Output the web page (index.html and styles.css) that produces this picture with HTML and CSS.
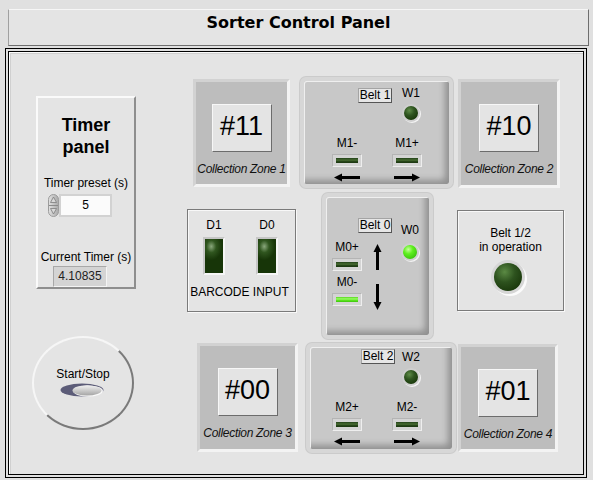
FILE: index.html
```html
<!DOCTYPE html>
<html lang="en">
<head>
<meta charset="utf-8">
<title>Sorter Control Panel</title>
<link rel="stylesheet" href="styles.css">
</head>
<body>
<header class="title">Sorter Control Panel</header>
<main class="frame">
  <div class="canvas">

    <section class="timer">
      <h1 class="timer-title">Timer<br>panel</h1>
      <div class="lbl lbl-preset">Timer preset (s)</div>
      <div class="numeric">
        <svg class="spin" width="11" height="23" viewBox="0 0 11 23">
          <defs>
            <linearGradient id="spg" x1="0" y1="0" x2="1" y2="0">
              <stop offset="0" stop-color="#e2e2e2"/>
              <stop offset="1" stop-color="#a9a9a9"/>
            </linearGradient>
          </defs>
          <rect x="0.5" y="0.5" width="10" height="22" rx="5" fill="url(#spg)" stroke="#9c9c9c"/>
          <line x1="1" y1="11.5" x2="10" y2="11.5" stroke="#8a8a8a"/>
          <path d="M5.5 3 L8.5 8.5 L2.5 8.5 Z" fill="#d8d8d8" stroke="#7c7c7c" stroke-width="0.8"/>
          <path d="M5.5 20 L8.5 14.5 L2.5 14.5 Z" fill="#d8d8d8" stroke="#7c7c7c" stroke-width="0.8"/>
        </svg>
        <span class="num-field">5</span>
      </div>
      <div class="lbl lbl-current">Current Timer (s)</div>
      <div class="indicator">4.10835</div>
    </section>

    <section class="startstop">
      <span class="ss-label">Start/Stop</span>
      <svg class="oval" width="44" height="14" viewBox="0 0 44 14">
        <defs>
          <linearGradient id="ovg" x1="0" y1="0" x2="0" y2="1">
            <stop offset="0" stop-color="#f2f2f2"/>
            <stop offset="1" stop-color="#a4a4a4"/>
          </linearGradient>
        </defs>
        <ellipse cx="22" cy="7" rx="21.5" ry="6.5" fill="#5c5c78"/>
        <ellipse cx="28" cy="8" rx="15" ry="5.5" fill="#fafafa"/>
        <ellipse cx="27" cy="7.4" rx="14.5" ry="5.2" fill="url(#ovg)"/>
      </svg>
    </section>

    <section class="zone zone1">
      <div class="zone-num">#11</div>
      <div class="zone-cap">Collection Zone 1</div>
    </section>

    <section class="belt belt1">
      <div class="belt-head">
        <span class="belt-tag">Belt 1</span>
        <div class="wcol"><span>W1</span><i class="led"></i></div>
      </div>
      <div class="motors">
        <div class="motor">
          <span>M1-</span><i class="bar"><b></b></i>
          <svg class="arrow-h" width="26" height="9" viewBox="0 0 26 9"><path d="M0 4.5 L8 0.5 L8 3 L26 3 L26 6 L8 6 L8 8.5 Z" fill="#000"/></svg>
        </div>
        <div class="motor">
          <span>M1+</span><i class="bar"><b></b></i>
          <svg class="arrow-h" width="26" height="9" viewBox="0 0 26 9"><path d="M26 4.5 L18 0.5 L18 3 L0 3 L0 6 L18 6 L18 8.5 Z" fill="#000"/></svg>
        </div>
      </div>
    </section>

    <section class="zone zone2">
      <div class="zone-num">#10</div>
      <div class="zone-cap">Collection Zone 2</div>
    </section>

    <section class="barcode">
      <div class="dleds">
        <div class="dcol"><span>D1</span><i class="dled"></i></div>
        <div class="dcol dcol-up"><span>D0</span><i class="dled"></i></div>
      </div>
      <div class="barcode-cap">BARCODE INPUT</div>
    </section>

    <section class="belt belt0">
      <div class="b0-col1">
        <span>M0+</span><i class="bar"><b></b></i>
        <span class="b0-lbl2">M0-</span><i class="bar bar-on"><b></b></i>
      </div>
      <div class="b0-col2">
        <span class="belt-tag">Belt 0</span>
        <svg class="arrow-up" width="9" height="26" viewBox="0 0 9 26"><path d="M4.5 0 L8.5 8 L6 8 L6 26 L3 26 L3 8 L0.5 8 Z" fill="#000"/></svg>
        <svg class="arrow-down" width="9" height="26" viewBox="0 0 9 26"><path d="M4.5 26 L8.5 18 L6 18 L6 0 L3 0 L3 18 L0.5 18 Z" fill="#000"/></svg>
      </div>
      <div class="b0-col3">
        <span>W0</span><i class="led led-on"></i>
      </div>
    </section>

    <section class="belt12">
      <div>Belt 1/2</div>
      <div>in operation</div>
      <i class="bigled"></i>
    </section>

    <section class="zone zone3">
      <div class="zone-num">#00</div>
      <div class="zone-cap">Collection Zone 3</div>
    </section>

    <section class="belt belt2">
      <div class="belt-head">
        <span class="belt-tag">Belt 2</span>
        <div class="wcol"><span>W2</span><i class="led"></i></div>
      </div>
      <div class="motors">
        <div class="motor">
          <span>M2+</span><i class="bar"><b></b></i>
          <svg class="arrow-h" width="26" height="9" viewBox="0 0 26 9"><path d="M0 4.5 L8 0.5 L8 3 L26 3 L26 6 L8 6 L8 8.5 Z" fill="#000"/></svg>
        </div>
        <div class="motor">
          <span>M2-</span><i class="bar"><b></b></i>
          <svg class="arrow-h" width="26" height="9" viewBox="0 0 26 9"><path d="M26 4.5 L18 0.5 L18 3 L0 3 L0 6 L18 6 L18 8.5 Z" fill="#000"/></svg>
        </div>
      </div>
    </section>

    <section class="zone zone4">
      <div class="zone-num">#01</div>
      <div class="zone-cap">Collection Zone 4</div>
    </section>

  </div>
</main>
</body>
</html>
```

FILE: styles.css
```css
html, body {
  margin: 0;
  padding: 0;
}

body {
  width: 593px;
  height: 480px;
  overflow: hidden;
  background: #e0e0e0;
  font-family: "Liberation Sans", Arial, sans-serif;
  font-size: 12px;
  color: #000;
}

/* ---------- Title ---------- */
.title {
  margin: 9px 0 0 8px;
  width: 581px;
  height: 37px;
  box-sizing: border-box;
  padding-top: 4px;
  border: 1px solid;
  border-color: #f6f6f6 #6e6e6e #6e6e6e #a0a0a0;
  background: #e4e4e4;
  text-align: center;
  font-family: "DejaVu Sans", Verdana, sans-serif;
  font-size: 16px;
  line-height: 18px;
  font-weight: bold;
}

/* ---------- Frame ---------- */
.frame {
  display: block;
  margin: 2px 0 0 5px;
  width: 582px;
  height: 430px;
  box-sizing: border-box;
  border: 1px solid #000;
  padding: 2px;
}

.canvas {
  position: relative;
  height: 100%;
  box-sizing: border-box;
  border: 1px solid #000;
  background: #e4e4e4;
  box-shadow: inset 1px 1px 0 #fbfbfb, inset 2px 2px 0 #d0d0d0;
}

/* ---------- Timer panel ---------- */
.timer {
  position: absolute;
  left: 27px;
  top: 44px;
  width: 100px;
  height: 193px;
  box-sizing: border-box;
  border: 2px solid;
  border-color: #fafafa #8e8e8e #8e8e8e #fafafa;
  display: flex;
  flex-direction: column;
  align-items: center;
  padding-top: 16px;
}

.timer-title {
  margin: 0;
  font-size: 18px;
  line-height: 22px;
  font-weight: bold;
  text-align: center;
}

.lbl {
  line-height: 14px;
  white-space: nowrap;
}

.lbl-preset {
  margin-top: 18px;
}

.lbl-current {
  margin-top: 33px;
}

.numeric {
  align-self: flex-start;
  margin: 4px 0 0 10px;
  display: flex;
  height: 23px;
}

.spin {
  display: block;
}

.num-field {
  width: 53px;
  height: 23px;
  box-sizing: border-box;
  border: 2px solid #d2d2d2;
  background: #fbfbfb;
  text-align: center;
  line-height: 19px;
}

.indicator {
  align-self: flex-start;
  margin: 2px 0 0 15px;
  width: 54px;
  height: 21px;
  box-sizing: border-box;
  background: #d4d4d4;
  border: 1px solid;
  border-color: #a8a8a8 #f4f4f4 #f4f4f4 #a8a8a8;
  text-align: center;
  line-height: 19px;
  color: #222;
}

/* ---------- Start / Stop ---------- */
.startstop {
  position: absolute;
  left: 23px;
  top: 284px;
  width: 102px;
  height: 94px;
  box-sizing: border-box;
  border-radius: 50%;
  border: 2px solid;
  border-color: #f6f6f6 #7a7a7a #7a7a7a #f6f6f6;
  display: flex;
  flex-direction: column;
  align-items: center;
  padding-top: 29px;
}

.ss-label {
  line-height: 14px;
}

.oval {
  display: block;
  margin-top: 2px;
  margin-right: 3px;
}

/* ---------- Collection zones ---------- */
.zone {
  position: absolute;
  box-sizing: border-box;
  border: 3px solid;
  border-color: #d2d2d2 #f3f3f3 #f3f3f3 #d2d2d2;
  background: #bdbdbd;
  display: flex;
  flex-direction: column;
  align-items: center;
  padding-top: 22px;
}

.zone1 { left: 184px; top: 27px; width: 97px; height: 108px; }
.zone2 { left: 449px; top: 27px; width: 102px; height: 109px; }
.zone3 { left: 188px; top: 291px; width: 101px; height: 109px; }
.zone4 { left: 449px; top: 292px; width: 100px; height: 108px; }

.zone-num {
  width: 60px;
  height: 48px;
  box-sizing: border-box;
  border: 1px solid;
  border-color: #f7f7f7 #6c6c6c #6c6c6c #f7f7f7;
  background: #e4e4e4;
  font-size: 27px;
  line-height: 42px;
  text-align: center;
}

.zone-cap {
  margin-top: 10px;
  font-style: italic;
  line-height: 14px;
  letter-spacing: -0.3px;
  white-space: nowrap;
  color: #111;
}

/* ---------- Belts ---------- */
.belt {
  position: absolute;
  box-sizing: border-box;
  border: 4px solid #d7d7d7;
  border-radius: 6px;
  background: #c8c8c8;
  box-shadow: inset 1px 1px 0 #efefef, inset -6px -6px 6px -2px rgba(0, 0, 0, 0.28), 0 0 0 1px #cbcbcb;
}

.belt1 { left: 291px; top: 25px; width: 153px; height: 111px; }
.belt2 { left: 297px; top: 291px; width: 150px; height: 110px; }
.belt0 {
  left: 313px;
  top: 141px;
  width: 111px;
  height: 146px;
  display: flex;
  padding-left: 6px;
}

.belt-head {
  display: flex;
  align-items: flex-start;
}

.belt1 .belt-head { padding-left: 54px; gap: 9px; }
.belt1 .belt-tag { margin-top: 7px; }
.belt1 .wcol { padding-top: 5px; }

.belt2 .belt-head { padding-left: 51px; gap: 6px; }
.belt2 .belt-tag { margin-top: 2px; }
.belt2 .wcol { padding-top: 3px; }

.belt-tag {
  display: block;
  width: 34px;
  height: 15px;
  flex: none;
  box-sizing: border-box;
  border: 1px solid;
  border-color: #a4a4a4 #555 #555 #a4a4a4;
  background: #e6e6e6;
  text-align: center;
  line-height: 13px;
}

.wcol {
  width: 20px;
  display: flex;
  flex-direction: column;
  align-items: center;
  line-height: 14px;
}

.led {
  display: block;
  width: 14px;
  height: 14px;
  margin-top: 6px;
  border-radius: 50%;
  background: radial-gradient(circle at 38% 32%, #5f8c48 0, #2f5520 38%, #163407 85%);
  box-shadow: 0 0 0 2px #cfcfcf, 1px 1px 0 2px #f3f3f3;
}

.led-on {
  background: radial-gradient(circle at 38% 32%, #c8ff9c 0, #5ef01e 35%, #34b80c 90%);
}

.motors {
  display: flex;
  gap: 30px;
  margin-top: 16px;
}

.belt1 .motors { padding-left: 28px; }
.belt2 .motors { padding-left: 22px; }

.motor {
  width: 30px;
  display: flex;
  flex-direction: column;
  align-items: center;
  line-height: 14px;
}

.bar {
  display: block;
  margin-top: 4px;
  width: 30px;
  height: 13px;
  box-sizing: border-box;
  padding: 3px;
  background: #d4d4d4;
  border: 1px solid;
  border-color: #b4b4b4 #eeeeee #eeeeee #b4b4b4;
}

.bar b {
  display: block;
  height: 100%;
  background: linear-gradient(#23421a, #4a6e34 45%, #2b4b1c 60%, #1a3510);
}

.bar-on b {
  background: linear-gradient(#5ad61e, #9cff6a 40%, #62ea22 60%, #3cc40c);
}

.arrow-h {
  display: block;
  margin-top: 6px;
}

.b0-col1 {
  width: 30px;
  padding-top: 43px;
  display: flex;
  flex-direction: column;
  align-items: center;
  line-height: 14px;
}

.b0-lbl2 {
  margin-top: 4px;
}

.b0-col2 {
  width: 30px;
  padding-top: 21px;
  display: flex;
  flex-direction: column;
  align-items: center;
}

.b0-col2 .belt-tag {
  margin-left: -4px;
}

.arrow-up {
  display: block;
  margin-top: 11px;
}

.arrow-down {
  display: block;
  margin-top: 14px;
}

.b0-col3 {
  margin-left: 8px;
  width: 20px;
  padding-top: 26px;
  display: flex;
  flex-direction: column;
  align-items: center;
  line-height: 14px;
}

.b0-col3 .led {
  margin-top: 8px;
}

/* ---------- Barcode ---------- */
.barcode {
  position: absolute;
  left: 178px;
  top: 157px;
  width: 109px;
  height: 103px;
  box-sizing: border-box;
  border: 1px solid #7a7a7a;
  box-shadow: inset 1px 1px 0 #f8f8f8, 1px 1px 0 #f8f8f8;
  padding-top: 8px;
  display: flex;
  flex-direction: column;
}

.dleds {
  display: flex;
  gap: 31px;
  padding-left: 15px;
}

.dcol {
  width: 22px;
  display: flex;
  flex-direction: column;
  align-items: center;
  line-height: 14px;
}

.dled {
  display: block;
  margin-top: 5px;
  width: 22px;
  height: 38px;
  box-sizing: border-box;
  border: 2px solid;
  border-color: #c6c6c6 #f6f6f6 #f6f6f6 #c6c6c6;
  background: radial-gradient(ellipse 60% 40% at 35% 22%, #8aa87c 0, #30561f 45%, #173508 100%);
}

.barcode-cap {
  margin-top: 10px;
  text-align: center;
  line-height: 14px;
  padding-right: 4px;
}

/* ---------- Belt 1/2 in operation ---------- */
.belt12 {
  position: absolute;
  left: 448px;
  top: 158px;
  width: 107px;
  height: 101px;
  box-sizing: border-box;
  border: 1px solid #7a7a7a;
  box-shadow: inset 1px 1px 0 #f8f8f8, 1px 1px 0 #f8f8f8;
  padding-top: 15px;
  display: flex;
  flex-direction: column;
  align-items: center;
  text-align: center;
  line-height: 14px;
}

.bigled {
  display: block;
  margin-top: 9px;
  margin-right: 5px;
  width: 28px;
  height: 28px;
  border-radius: 50%;
  background: radial-gradient(circle at 38% 32%, #5b8a44 0, #2d521e 40%, #143006 90%);
  box-shadow: 0 0 0 3px #d6d6d6, 2px 2px 0 3px #fbfbfb;
}
```
